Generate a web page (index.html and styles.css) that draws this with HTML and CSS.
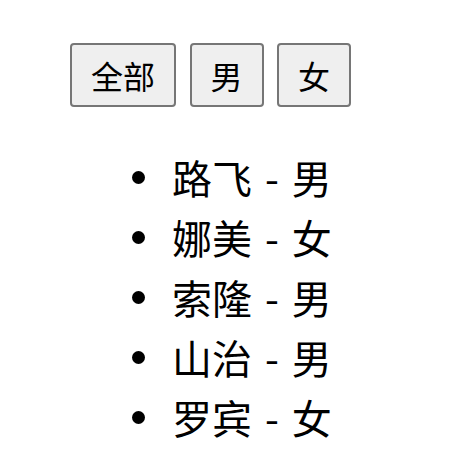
FILE: index.html
```html
<!DOCTYPE html>
<html lang="zh">
<head>
<meta charset="utf-8">
<link rel="stylesheet" href="styles.css">
</head>
<body>
<div class="app">
  <div class="filters">
    <button class="btn">全部</button>
    <button class="btn">男</button>
    <button class="btn">女</button>
  </div>
  <ul class="list">
    <li class="item">路飞 - 男</li>
    <li class="item">娜美 - 女</li>
    <li class="item">索隆 - 男</li>
    <li class="item">山治 - 男</li>
    <li class="item">罗宾 - 女</li>
  </ul>
</div>
</body>
</html>
```
FILE: styles.css
```css
html, body {
  margin: 0;
  padding: 0;
  background: #ffffff;
}
.app {
  padding: 43px 0 0 70px;
  font-family: "Noto Sans CJK SC", "Noto Sans", sans-serif;
  color: #000;
}
.filters {
  display: flex;
  gap: 13.5px;
}
.btn {
  font-family: "Noto Sans CJK SC", sans-serif;
  font-size: 32px;
  line-height: 44px;
  padding: 8px 19px;
  border: 2px solid #767676;
  border-radius: 4px;
  background: #efefef;
  color: #000;
  margin: 0;
}
.list {
  margin: 40px 0 0 0;
  padding-left: 62px;
  list-style: none;
  font-size: 40px;
  line-height: 60px;
  word-spacing: 4px;
}
.item {
  display: flex;
  align-items: center;
  white-space: pre;
}
.item::before {
  content: "";
  width: 13px;
  height: 13px;
  border-radius: 50%;
  background: #000;
  margin-right: 27px;
  flex: none;
}
```
